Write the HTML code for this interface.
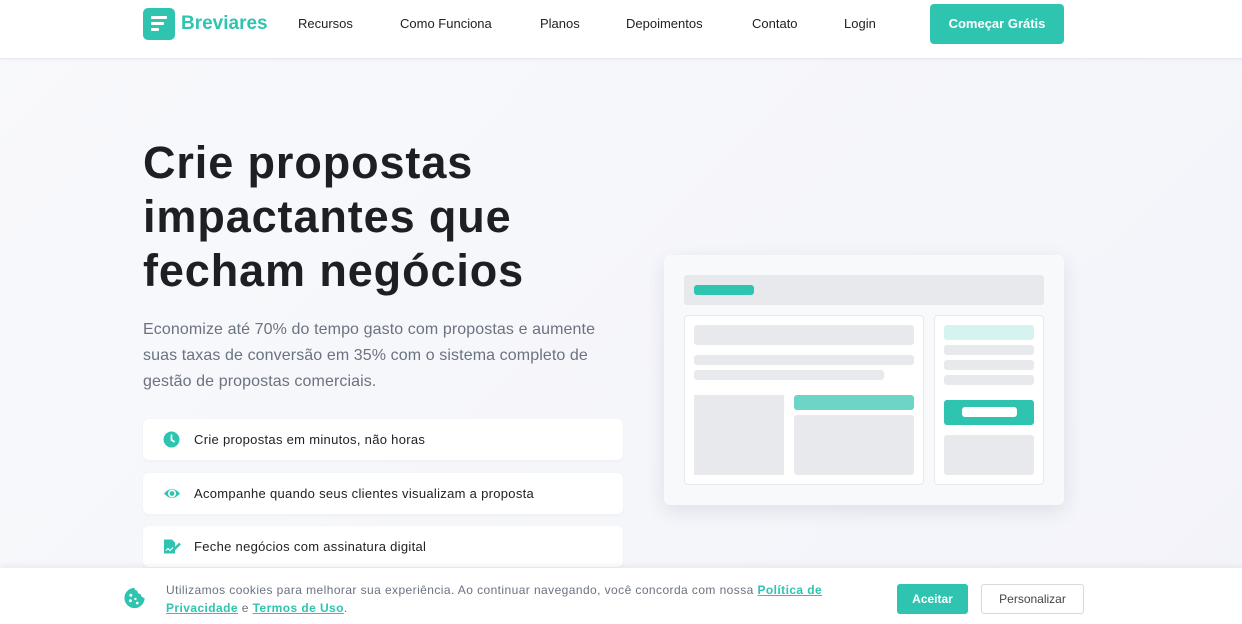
<!DOCTYPE html>
<html><head><meta charset="utf-8"><style>
*{margin:0;padding:0;box-sizing:border-box}
body{width:1242px;height:624px;overflow:hidden;font-family:"Liberation Sans",sans-serif;background:linear-gradient(135deg,#f8f9fb,#f3f4fa);position:relative;color:#1f2328}
.nav{position:absolute;top:0;left:0;right:0;height:59px;background:#fff;border-bottom:1px solid #e8e9ee;box-shadow:0 1px 4px rgba(0,0,0,.04)}
.logo{position:absolute;left:143px;top:8px;width:32px;height:32px;background:#2ec4b0;border-radius:5px}
.logo i{position:absolute;left:8px;height:3px;background:#fff;border-radius:1px}
.brand{position:absolute;left:181px;top:13px;font-size:19px;font-weight:bold;color:#2ec4b0}
.nl{position:absolute;top:16px;font-size:13px;color:#222}
.cta{position:absolute;left:930px;top:4px;width:134px;height:40px;background:#2ec4b0;border-radius:4px;color:#fff;font-weight:bold;font-size:13px;text-align:center;line-height:40px}
h1{position:absolute;left:143px;top:136px;font-size:45px;line-height:54px;font-weight:bold;color:#1c1f24;letter-spacing:.9px}
.p{position:absolute;left:143px;top:317px;width:482px;font-size:16px;line-height:26px;color:#6b7280;letter-spacing:.1px}
.f{position:absolute;left:143px;width:480px;height:41px;background:#fff;border-radius:6px;box-shadow:0 1px 3px rgba(0,0,0,.04);font-size:13px;line-height:41px;padding-left:51px;color:#222;letter-spacing:.3px}
.f svg{position:absolute;left:20px;top:12px}
.mock{position:absolute;left:664px;top:255px;width:400px;height:250px;background:#f8f9fb;border-radius:6px;box-shadow:0 6px 20px rgba(30,40,80,.1)}
.b{position:absolute;background:#e7e9ec;border-radius:3px}
.w{position:absolute;background:#fff;border:1px solid #e6e8eb;border-radius:4px}
.ck{position:absolute;left:0;right:0;top:568px;height:56px;background:#fff;box-shadow:0 -2px 6px rgba(0,0,0,.06)}
.ck .t{position:absolute;left:166px;top:13px;width:680px;font-size:12px;line-height:18px;color:#6b7280;letter-spacing:.42px}
.ck a{color:#2ec4b0;font-weight:bold;text-decoration:underline}
.ac{position:absolute;left:897px;top:16px;width:71px;height:30px;background:#2ec4b0;border-radius:3px;color:#fff;font-weight:bold;font-size:12px;text-align:center;line-height:30px}
.pe{position:absolute;left:981px;top:16px;width:103px;height:30px;border:1px solid #d6d9de;border-radius:3px;color:#444;font-size:12px;text-align:center;line-height:28px}
</style></head><body>
<div class="nav">
<div class="logo"><i style="top:8px;width:16px"></i><i style="top:14px;width:13px"></i><i style="top:20px;width:8px"></i></div>
<div class="brand">Breviares</div>
<div class="nl" style="left:298px">Recursos</div>
<div class="nl" style="left:400px">Como Funciona</div>
<div class="nl" style="left:540px">Planos</div>
<div class="nl" style="left:626px">Depoimentos</div>
<div class="nl" style="left:752px">Contato</div>
<div class="nl" style="left:844px">Login</div>
<div class="cta">Começar Grátis</div>
</div>
<h1>Crie propostas<br>impactantes que<br>fecham negócios</h1>
<div class="p">Economize até 70% do tempo gasto com propostas e aumente suas taxas de conversão em 35% com o sistema completo de gestão de propostas comerciais.</div>
<div class="f" style="top:419px"><svg width="17" height="17" viewBox="0 0 16 16"><circle cx="8" cy="8" r="7.5" fill="#2ec4b0"/><path d="M8 4v4.5l2.5 1.5" stroke="#fff" stroke-width="1.6" fill="none" stroke-linecap="round"/></svg>Crie propostas em minutos, não horas</div>
<div class="f" style="top:473px"><svg width="18" height="17" viewBox="0 0 18 16"><path d="M1 8Q9-1 17 8Q9 17 1 8Z" fill="#2ec4b0"/><circle cx="9" cy="8" r="3.2" fill="none" stroke="#fff" stroke-width="1.6"/></svg>Acompanhe quando seus clientes visualizam a proposta</div>
<div class="f" style="top:526px"><svg width="18" height="17" viewBox="0 0 18 16"><path d="M1 1h8l3 3v11H1Z" fill="#2ec4b0"/><path d="M3 12l2-2 2 2 3-3" stroke="#fff" stroke-width="1.2" fill="none"/><path d="M11 11l6-6" stroke="#2ec4b0" stroke-width="2.5"/></svg>Feche negócios com assinatura digital</div>
<div class="mock">
<div class="b" style="left:20px;top:20px;width:360px;height:30px"></div>
<div class="b" style="left:30px;top:30px;width:60px;height:10px;background:#2ec4b0"></div>
<div class="w" style="left:20px;top:60px;width:240px;height:170px"></div>
<div class="b" style="left:30px;top:70px;width:220px;height:20px"></div>
<div class="b" style="left:30px;top:100px;width:220px;height:10px"></div>
<div class="b" style="left:30px;top:115px;width:190px;height:10px"></div>
<div class="b" style="left:30px;top:140px;width:90px;height:80px;border-radius:0"></div>
<div class="b" style="left:130px;top:140px;width:120px;height:15px;background:#6dd5c8"></div>
<div class="b" style="left:130px;top:160px;width:120px;height:60px"></div>
<div class="w" style="left:270px;top:60px;width:110px;height:170px"></div>
<div class="b" style="left:280px;top:70px;width:90px;height:15px;background:#d5f3ef"></div>
<div class="b" style="left:280px;top:90px;width:90px;height:10px"></div>
<div class="b" style="left:280px;top:105px;width:90px;height:10px"></div>
<div class="b" style="left:280px;top:120px;width:90px;height:10px"></div>
<div class="b" style="left:280px;top:145px;width:90px;height:25px;background:#2ec4b0"></div>
<div class="b" style="left:298px;top:152px;width:55px;height:10px;background:#fff"></div>
<div class="b" style="left:280px;top:180px;width:90px;height:40px"></div>
</div>
<div class="ck">
<svg style="position:absolute;left:123px;top:19px" width="23" height="22" viewBox="0 0 24 24"><path d="M12 1a11 11 0 1 0 11 11 4 4 0 0 1-4-4 4 4 0 0 1-4-4 3 3 0 0 1-3-3Z" fill="#2ec4b0"/><circle cx="8" cy="9" r="1.6" fill="#fff"/><circle cx="7.5" cy="15" r="1.6" fill="#fff"/><circle cx="13" cy="13" r="1.3" fill="#fff"/><circle cx="15" cy="17.5" r="1.5" fill="#fff"/></svg>
<div class="t">Utilizamos cookies para melhorar sua experiência. Ao continuar navegando, você concorda com nossa <a>Política de</a><br><a>Privacidade</a> e <a>Termos de Uso</a>.</div>
<div class="ac">Aceitar</div>
<div class="pe">Personalizar</div>
</div>
</body></html>
